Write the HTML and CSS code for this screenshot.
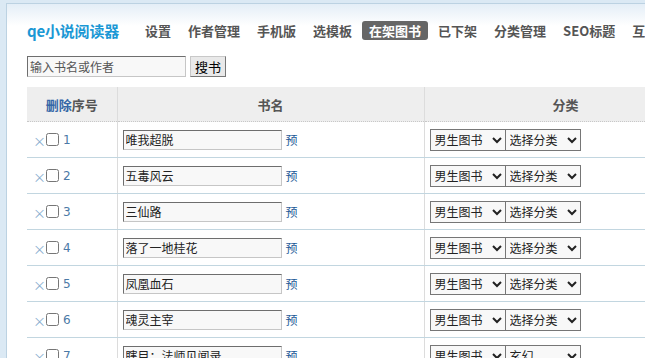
FILE: index.html
```html
<!DOCTYPE html>
<html lang="zh-CN">
<head>
<meta charset="utf-8">
<title>qe小说阅读器</title>
<link rel="stylesheet" href="styles.css">
</head>
<body>
<div class="main">
  <div class="header">
    <div class="logo">qe小说阅读器</div>
    <ul class="nav">
      <li><a>设置</a></li>
      <li><a>作者管理</a></li>
      <li><a>手机版</a></li>
      <li><a>选模板</a></li>
      <li><a class="active">在架图书</a></li>
      <li><a>已下架</a></li>
      <li><a>分类管理</a></li>
      <li><a>SEO标题</a></li>
      <li><a>互动</a></li>
    </ul>
  </div>
  <form class="search">
    <input class="search-input" type="text" placeholder="输入书名或作者">
    <button class="search-btn" type="button">搜书</button>
  </form>
  <table class="books">
    <colgroup><col class="c1"><col class="c2"><col class="c3"></colgroup>
    <thead>
      <tr><th><span class="del">删除</span>序号</th><th>书名</th><th>分类</th></tr>
    </thead>
    <tbody>
      <tr><td class="idx"><span class="x">×</span><input type="checkbox" class="chk"><span class="num">1</span></td><td class="name"><input class="title" value="唯我超脱"><a class="pre">预</a></td><td class="cat"><select><option>男生图书</option></select><select><option>选择分类</option></select></td></tr>
      <tr><td class="idx"><span class="x">×</span><input type="checkbox" class="chk"><span class="num">2</span></td><td class="name"><input class="title" value="五毒风云"><a class="pre">预</a></td><td class="cat"><select><option>男生图书</option></select><select><option>选择分类</option></select></td></tr>
      <tr><td class="idx"><span class="x">×</span><input type="checkbox" class="chk"><span class="num">3</span></td><td class="name"><input class="title" value="三仙路"><a class="pre">预</a></td><td class="cat"><select><option>男生图书</option></select><select><option>选择分类</option></select></td></tr>
      <tr><td class="idx"><span class="x">×</span><input type="checkbox" class="chk"><span class="num">4</span></td><td class="name"><input class="title" value="落了一地桂花"><a class="pre">预</a></td><td class="cat"><select><option>男生图书</option></select><select><option>选择分类</option></select></td></tr>
      <tr><td class="idx"><span class="x">×</span><input type="checkbox" class="chk"><span class="num">5</span></td><td class="name"><input class="title" value="凤凰血石"><a class="pre">预</a></td><td class="cat"><select><option>男生图书</option></select><select><option>选择分类</option></select></td></tr>
      <tr><td class="idx"><span class="x">×</span><input type="checkbox" class="chk"><span class="num">6</span></td><td class="name"><input class="title" value="魂灵主宰"><a class="pre">预</a></td><td class="cat"><select><option>男生图书</option></select><select><option>选择分类</option></select></td></tr>
      <tr><td class="idx"><span class="x">×</span><input type="checkbox" class="chk"><span class="num">7</span></td><td class="name"><input class="title" value="瞎目：法师见闻录"><a class="pre">预</a></td><td class="cat"><select><option>男生图书</option></select><select><option>玄幻&nbsp;&nbsp;&nbsp;&nbsp;&nbsp;&nbsp;</option></select></td></tr>
    </tbody>
  </table>
</div>
</body>
</html>
```
FILE: styles.css
```css
html, body {
  margin: 0;
  padding: 0;
}
body {
  background: #dbe9f4;
  font-family: "Noto Sans CJK SC", "Noto Sans", sans-serif;
  font-size: 12px;
  color: #333;
  overflow: hidden;
}
.main {
  margin: 3px 0 0 6px;
  border-left: 1px solid #bcd2e2;
  border-top: 1px solid #bcd2e2;
  background: linear-gradient(#e4eef7, #ffffff 22px);
  padding: 16px 0 0 20px;
  height: 400px;
  overflow: hidden;
}
.header {
  display: flex;
  align-items: center;
  height: 20px;
  white-space: nowrap;
}
.logo {
  font-family: "Noto Sans CJK SC", sans-serif;
  font-weight: bold;
  font-size: 15px;
  color: #1b98d5;
  margin-right: 19px;
  letter-spacing: -0.2px;
}
.nav {
  display: flex;
  gap: 3px;
  list-style: none;
  margin: 0;
  padding: 0;
}
.nav a {
  display: block;
  padding: 0 7px;
  height: 19px;
  line-height: 19px;
  font-size: 13px;
  font-weight: bold;
  color: #555;
  border-radius: 3px;
}
.nav a.active {
  background: #666;
  color: #fff;
}
.search {
  display: flex;
  gap: 4px;
  margin: 16px 0 0 0;
}
.search-input {
  box-sizing: border-box;
  width: 159px;
  height: 21px;
  margin: 0;
  padding: 0 2px;
  border: 1px solid #c6c6c6;
  border-top-color: #6e6e6e;
  border-left-color: #6e6e6e;
  background: #f8f8f8;
  font-family: "Noto Sans CJK SC", sans-serif;
  font-size: 12px;
  color: #333;
}
.search-input::placeholder {
  color: #555;
}
.search-btn {
  box-sizing: border-box;
  width: 36px;
  height: 21px;
  margin: 0;
  padding: 0;
  border: 1px solid #777;
  border-top-color: #c8c8c8;
  border-left-color: #c8c8c8;
  background: #e9e9e9;
  font-family: "Noto Sans CJK SC", sans-serif;
  font-size: 13px;
  color: #000;
}
.books {
  margin-top: 10px;
  border-collapse: collapse;
  table-layout: fixed;
  width: 680px;
}
.c1 { width: 90px; }
.c2 { width: 307px; }
.c3 { width: 283px; }
.books th {
  height: 34px;
  background: #eeeeee;
  border-bottom: 1px dotted #c8c8c8;
  border-right: 1px solid #dcdcdc;
  font-size: 13px;
  font-weight: bold;
  color: #555;
  padding: 0;
  text-align: center;
}
.books th .del {
  color: #3567a7;
}
.books td {
  height: 35px;
  padding: 0;
  border-bottom: 1px solid #c2d6e0;
  border-right: 1px solid #dcdcdc;
  white-space: nowrap;
}
.idx {
  padding-left: 6px !important;
}
.x {
  display: inline-block;
  width: 13px;
  color: #8aaed0;
  font-size: 13px;
  vertical-align: middle;
}
.chk {
  box-sizing: border-box;
  width: 13px;
  height: 13px;
  margin: -2px 4px 0 0;
  vertical-align: middle;
}
.num {
  color: #4b79a6;
  font-family: "DejaVu Sans", sans-serif;
  font-size: 12px;
  vertical-align: middle;
}
.name {
  padding-left: 5px !important;
}
.title {
  box-sizing: border-box;
  width: 159px;
  height: 20px;
  margin: 0 4px 0 0;
  padding: 0 2px;
  border: 1px solid #c6c6c6;
  border-top-color: #6e6e6e;
  border-left-color: #6e6e6e;
  background: #f8f8f8;
  font-family: "Noto Sans CJK SC", sans-serif;
  font-size: 12px;
  color: #222;
  vertical-align: middle;
}
.pre {
  color: #1d5a98;
  font-size: 12px;
  vertical-align: middle;
}
.cat {
  padding-left: 5px !important;
}
.cat select {
  box-sizing: border-box;
  width: 76px;
  height: 22px;
  margin: 0 -1px 0 0;
  font-family: "Noto Sans CJK SC", sans-serif;
  font-size: 12px;
  color: #222;
  background: #f8f8f8;
  border: 1px solid #767676;
  border-radius: 0;
  vertical-align: middle;
}
```
